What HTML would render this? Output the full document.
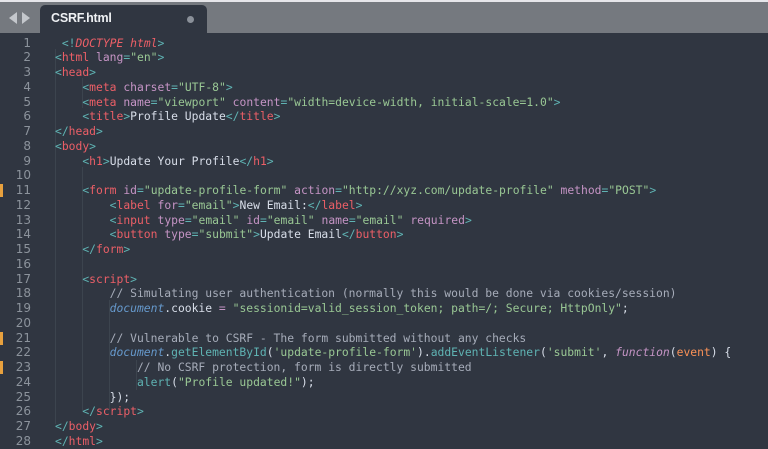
<!DOCTYPE html>
<html><head><meta charset="utf-8"><style>
body{margin:0;width:768px;height:449px;overflow:hidden;background:#303641;position:relative;font-family:"DejaVu Sans Mono",monospace}
.top{position:absolute;left:0;top:0;width:768px;height:2px;background:#e6e6ea}
.bar{position:absolute;left:0;top:2px;width:768px;height:31px;background:#75797f}
.tab{position:absolute;left:40px;top:5px;width:167px;height:30px;background:#303641;border-radius:5px 5px 0 0}
.tab span{position:absolute;left:11px;top:6px;font-family:"Liberation Sans",sans-serif;font-size:12.5px;color:#eef0f3;font-weight:bold;letter-spacing:-0.2px}
.dot{position:absolute;left:147px;top:11px;width:7px;height:7px;border-radius:50%;background:#8a9099}
.arr{position:absolute;top:12px}
.gut{position:absolute;left:0;width:31px;text-align:right;color:#8c939c;font-size:12px;font-family:"DejaVu Sans",sans-serif}
.ln{position:absolute;left:55px;white-space:pre;font-size:11.35px;color:#d8dee9}
.mk{position:absolute;left:0;width:3px;height:13px;background:#e8a13e}
.g{position:absolute;width:1px;background:#3c444e}
.p{color:#5fb3b3}.t{color:#ec5f67}.a{color:#c594c5}.s{color:#99c794}.c{color:#a6acb9}.d{color:#6699cc;font-style:italic}.f{color:#5fb3b3}.k{color:#c594c5;font-style:italic}.o{color:#f99157}
</style></head><body>
<div class="top"></div><div class="bar"></div>
<svg class="arr" style="left:9px" width="24" height="12"><polygon points="0,6 8,0 8,12" fill="#c4c7cc"/><polygon points="13,0 21,6 13,12" fill="#c4c7cc"/></svg>
<div class="tab"><span>CSRF.html</span><div class="dot"></div></div>
<div class="g" style="left:55px;top:49px;height:375px"></div>
<div class="g" style="left:82px;top:78px;height:30px"></div>
<div class="g" style="left:82px;top:167px;height:245px"></div>
<div class="g" style="left:109px;top:300px;height:110px"></div>
<div class="g" style="left:136px;top:360px;height:30px"></div>
<div class="mk" style="top:184px"></div><div class="mk" style="top:332px"></div><div class="mk" style="top:361px"></div>
<div class="ln" style="top:35.5px"> <span class="p">&lt;!</span><span class="t" style="font-style:italic">DOCTYPE</span> <span class="t" style="font-style:italic">html</span><span class="p">&gt;</span></div>
<div class="ln" style="top:50.25px"><span class="p">&lt;</span><span class="t">html</span> <span class="a">lang</span><span class="p">=</span><span class="s">"en"</span><span class="p">&gt;</span></div>
<div class="ln" style="top:65px"><span class="p">&lt;</span><span class="t">head</span><span class="p">&gt;</span></div>
<div class="ln" style="top:79.75px">    <span class="p">&lt;</span><span class="t">meta</span> <span class="a">charset</span><span class="p">=</span><span class="s">"UTF-8"</span><span class="p">&gt;</span></div>
<div class="ln" style="top:94.5px">    <span class="p">&lt;</span><span class="t">meta</span> <span class="a">name</span><span class="p">=</span><span class="s">"viewport"</span> <span class="a">content</span><span class="p">=</span><span class="s">"width=device-width, initial-scale=1.0"</span><span class="p">&gt;</span></div>
<div class="ln" style="top:109.25px">    <span class="p">&lt;</span><span class="t">title</span><span class="p">&gt;</span>Profile Update<span class="p">&lt;/</span><span class="t">title</span><span class="p">&gt;</span></div>
<div class="ln" style="top:124px"><span class="p">&lt;/</span><span class="t">head</span><span class="p">&gt;</span></div>
<div class="ln" style="top:138.75px"><span class="p">&lt;</span><span class="t">body</span><span class="p">&gt;</span></div>
<div class="ln" style="top:153.5px">    <span class="p">&lt;</span><span class="t">h1</span><span class="p">&gt;</span>Update Your Profile<span class="p">&lt;/</span><span class="t">h1</span><span class="p">&gt;</span></div>
<div class="ln" style="top:183px">    <span class="p">&lt;</span><span class="t">form</span> <span class="a">id</span><span class="p">=</span><span class="s">"update-profile-form"</span> <span class="a">action</span><span class="p">=</span><span class="s">"http://xyz.com/update-profile"</span> <span class="a">method</span><span class="p">=</span><span class="s">"POST"</span><span class="p">&gt;</span></div>
<div class="ln" style="top:197.75px">        <span class="p">&lt;</span><span class="t">label</span> <span class="a">for</span><span class="p">=</span><span class="s">"email"</span><span class="p">&gt;</span>New Email:<span class="p">&lt;/</span><span class="t">label</span><span class="p">&gt;</span></div>
<div class="ln" style="top:212.5px">        <span class="p">&lt;</span><span class="t">input</span> <span class="a">type</span><span class="p">=</span><span class="s">"email"</span> <span class="a">id</span><span class="p">=</span><span class="s">"email"</span> <span class="a">name</span><span class="p">=</span><span class="s">"email"</span> <span class="a">required</span><span class="p">&gt;</span></div>
<div class="ln" style="top:227.25px">        <span class="p">&lt;</span><span class="t">button</span> <span class="a">type</span><span class="p">=</span><span class="s">"submit"</span><span class="p">&gt;</span>Update Email<span class="p">&lt;/</span><span class="t">button</span><span class="p">&gt;</span></div>
<div class="ln" style="top:242px">    <span class="p">&lt;/</span><span class="t">form</span><span class="p">&gt;</span></div>
<div class="ln" style="top:271.5px">    <span class="p">&lt;</span><span class="t">script</span><span class="p">&gt;</span></div>
<div class="ln" style="top:286.25px">        <span class="c">// Simulating user authentication (normally this would be done via cookies/session)</span></div>
<div class="ln" style="top:301px">        <span class="d">document</span>.cookie <span class="a">=</span> <span class="s">"sessionid=valid_session_token; path=/; Secure; HttpOnly"</span>;</div>
<div class="ln" style="top:330.5px">        <span class="c">// Vulnerable to CSRF - The form submitted without any checks</span></div>
<div class="ln" style="top:345.25px">        <span class="d">document</span>.<span class="f">getElementById</span>(<span class="s">'update-profile-form'</span>).<span class="f">addEventListener</span>(<span class="s">'submit'</span>, <span class="k">function</span>(<span class="o">event</span>) {</div>
<div class="ln" style="top:360px">            <span class="c">// No CSRF protection, form is directly submitted</span></div>
<div class="ln" style="top:374.75px">            <span class="f">alert</span>(<span class="s">"Profile updated!"</span>);</div>
<div class="ln" style="top:389.5px">        });</div>
<div class="ln" style="top:404.25px">    <span class="p">&lt;/</span><span class="t">script</span><span class="p">&gt;</span></div>
<div class="ln" style="top:419px"><span class="p">&lt;/</span><span class="t">body</span><span class="p">&gt;</span></div>
<div class="ln" style="top:433.75px"><span class="p">&lt;/</span><span class="t">html</span><span class="p">&gt;</span></div>
<div class="gut" style="top:35.5px;line-height:14.75px">1<br>2<br>3<br>4<br>5<br>6<br>7<br>8<br>9<br>10<br>11<br>12<br>13<br>14<br>15<br>16<br>17<br>18<br>19<br>20<br>21<br>22<br>23<br>24<br>25<br>26<br>27<br>28</div>
</body></html>
